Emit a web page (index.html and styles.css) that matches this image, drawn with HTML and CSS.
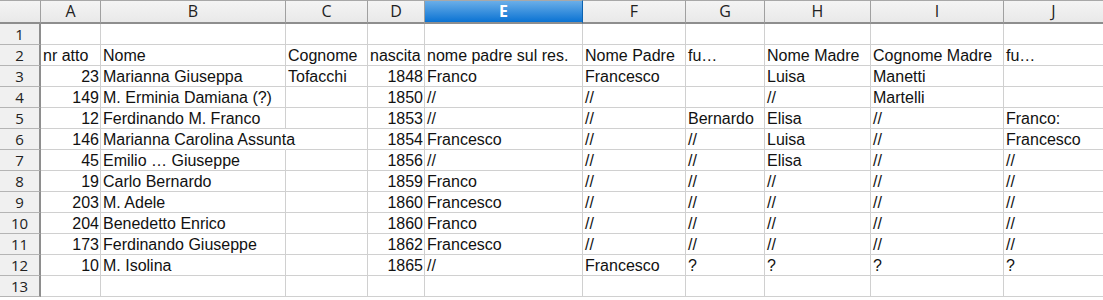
FILE: index.html
```html
<!DOCTYPE html>
<html lang="it">
<head>
    <meta charset="UTF-8">
    <title>Atti di nascita</title>
    <link rel="stylesheet" href="styles.css">
</head>
<body>
    <div class="sheet">
        <div class="row">
            <div class="corner"></div>
            <div class="col-head">A</div>
            <div class="col-head">B</div>
            <div class="col-head">C</div>
            <div class="col-head">D</div>
            <div class="col-head selected">E</div>
            <div class="col-head">F</div>
            <div class="col-head">G</div>
            <div class="col-head">H</div>
            <div class="col-head">I</div>
            <div class="col-head">J</div>
        </div>
        <div class="row">
            <div class="row-head">1</div>
            <div class="cell"></div><div class="cell"></div><div class="cell"></div><div class="cell"></div><div class="cell"></div>
            <div class="cell"></div><div class="cell"></div><div class="cell"></div><div class="cell"></div><div class="cell"></div>
        </div>
        <div class="row">
            <div class="row-head">2</div>
            <div class="cell">nr atto</div>
            <div class="cell">Nome</div>
            <div class="cell">Cognome</div>
            <div class="cell">nascita</div>
            <div class="cell">nome padre sul res.</div>
            <div class="cell">Nome Padre</div>
            <div class="cell">fu…</div>
            <div class="cell">Nome Madre</div>
            <div class="cell">Cognome Madre</div>
            <div class="cell">fu…</div>
        </div>
        <div class="row">
            <div class="row-head">3</div>
            <div class="cell num">23</div>
            <div class="cell">Marianna Giuseppa</div>
            <div class="cell">Tofacchi</div>
            <div class="cell num">1848</div>
            <div class="cell">Franco</div>
            <div class="cell">Francesco</div>
            <div class="cell"></div>
            <div class="cell">Luisa</div>
            <div class="cell">Manetti</div>
            <div class="cell"></div>
        </div>
        <div class="row">
            <div class="row-head">4</div>
            <div class="cell num">149</div>
            <div class="cell">M. Erminia Damiana (?)</div>
            <div class="cell"></div>
            <div class="cell num">1850</div>
            <div class="cell">//</div>
            <div class="cell">//</div>
            <div class="cell"></div>
            <div class="cell">//</div>
            <div class="cell">Martelli</div>
            <div class="cell"></div>
        </div>
        <div class="row">
            <div class="row-head">5</div>
            <div class="cell num">12</div>
            <div class="cell">Ferdinando M. Franco</div>
            <div class="cell"></div>
            <div class="cell num">1853</div>
            <div class="cell">//</div>
            <div class="cell">//</div>
            <div class="cell">Bernardo</div>
            <div class="cell">Elisa</div>
            <div class="cell">//</div>
            <div class="cell">Franco:</div>
        </div>
        <div class="row">
            <div class="row-head">6</div>
            <div class="cell num">146</div>
            <div class="cell spill">Marianna Carolina Assunta</div>
            <div class="cell"></div>
            <div class="cell num">1854</div>
            <div class="cell">Francesco</div>
            <div class="cell">//</div>
            <div class="cell">//</div>
            <div class="cell">Luisa</div>
            <div class="cell">//</div>
            <div class="cell">Francesco</div>
        </div>
        <div class="row">
            <div class="row-head">7</div>
            <div class="cell num">45</div>
            <div class="cell">Emilio … Giuseppe</div>
            <div class="cell"></div>
            <div class="cell num">1856</div>
            <div class="cell">//</div>
            <div class="cell">//</div>
            <div class="cell">//</div>
            <div class="cell">Elisa</div>
            <div class="cell">//</div>
            <div class="cell">//</div>
        </div>
        <div class="row">
            <div class="row-head">8</div>
            <div class="cell num">19</div>
            <div class="cell">Carlo Bernardo</div>
            <div class="cell"></div>
            <div class="cell num">1859</div>
            <div class="cell">Franco</div>
            <div class="cell">//</div>
            <div class="cell">//</div>
            <div class="cell">//</div>
            <div class="cell">//</div>
            <div class="cell">//</div>
        </div>
        <div class="row">
            <div class="row-head">9</div>
            <div class="cell num">203</div>
            <div class="cell">M. Adele</div>
            <div class="cell"></div>
            <div class="cell num">1860</div>
            <div class="cell">Francesco</div>
            <div class="cell">//</div>
            <div class="cell">//</div>
            <div class="cell">//</div>
            <div class="cell">//</div>
            <div class="cell">//</div>
        </div>
        <div class="row">
            <div class="row-head">10</div>
            <div class="cell num">204</div>
            <div class="cell">Benedetto Enrico</div>
            <div class="cell"></div>
            <div class="cell num">1860</div>
            <div class="cell">Franco</div>
            <div class="cell">//</div>
            <div class="cell">//</div>
            <div class="cell">//</div>
            <div class="cell">//</div>
            <div class="cell">//</div>
        </div>
        <div class="row">
            <div class="row-head">11</div>
            <div class="cell num">173</div>
            <div class="cell">Ferdinando Giuseppe</div>
            <div class="cell"></div>
            <div class="cell num">1862</div>
            <div class="cell">Francesco</div>
            <div class="cell">//</div>
            <div class="cell">//</div>
            <div class="cell">//</div>
            <div class="cell">//</div>
            <div class="cell">//</div>
        </div>
        <div class="row">
            <div class="row-head">12</div>
            <div class="cell num">10</div>
            <div class="cell">M. Isolina</div>
            <div class="cell"></div>
            <div class="cell num">1865</div>
            <div class="cell">//</div>
            <div class="cell">Francesco</div>
            <div class="cell">?</div>
            <div class="cell">?</div>
            <div class="cell">?</div>
            <div class="cell">?</div>
        </div>
        <div class="row">
            <div class="row-head">13</div>
            <div class="cell"></div><div class="cell"></div><div class="cell"></div><div class="cell"></div><div class="cell"></div>
            <div class="cell"></div><div class="cell"></div><div class="cell"></div><div class="cell"></div><div class="cell"></div>
        </div>
    </div>
</body>
</html>
```

FILE: styles.css
```css
body {
    margin: 0;
    background: #fff;
    overflow: hidden;
}
.sheet {
    display: grid;
    grid-template-columns: 41px 60px 185px 82px 57px 158px 103px 79px 106px 133px 100px;
    grid-template-rows: 24px;
    grid-auto-rows: 21px;
    font-family: "Liberation Sans", Arial, sans-serif;
    font-size: 16px;
    color: #111;
}
.row {
    display: contents;
}
.corner,
.col-head,
.row-head {
    box-sizing: border-box;
    background: linear-gradient(#f4f4f4, #e9e9e9);
    font-family: "Open Sans", "Liberation Sans", sans-serif;
    color: #222;
    text-align: center;
}
.corner,
.col-head {
    border-top: 1px solid #a8a8a8;
    border-right: 1px solid #a0a0a0;
    border-bottom: 2px solid #8e8e8e;
    font-size: 16px;
    line-height: 21px;
}
.col-head.selected {
    background: linear-gradient(#6aaee8, #0b73d3);
    color: #fff;
    font-weight: bold;
    border-right-color: #0b62b0;
}
.row-head {
    background: #f0f0f0;
    border-right: 2px solid #8e8e8e;
    border-bottom: 1px solid #b4b4b4;
    font-size: 15px;
    line-height: 20px;
}
.cell {
    box-sizing: border-box;
    border-right: 1px solid #d0d0d0;
    border-bottom: 1px solid #d0d0d0;
    padding: 1px 2px 0;
    line-height: 19px;
    white-space: nowrap;
    overflow: hidden;
}
.num {
    text-align: right;
    padding-right: 1px;
}
.spill {
    overflow: visible;
    border-right-color: transparent;
}
```
